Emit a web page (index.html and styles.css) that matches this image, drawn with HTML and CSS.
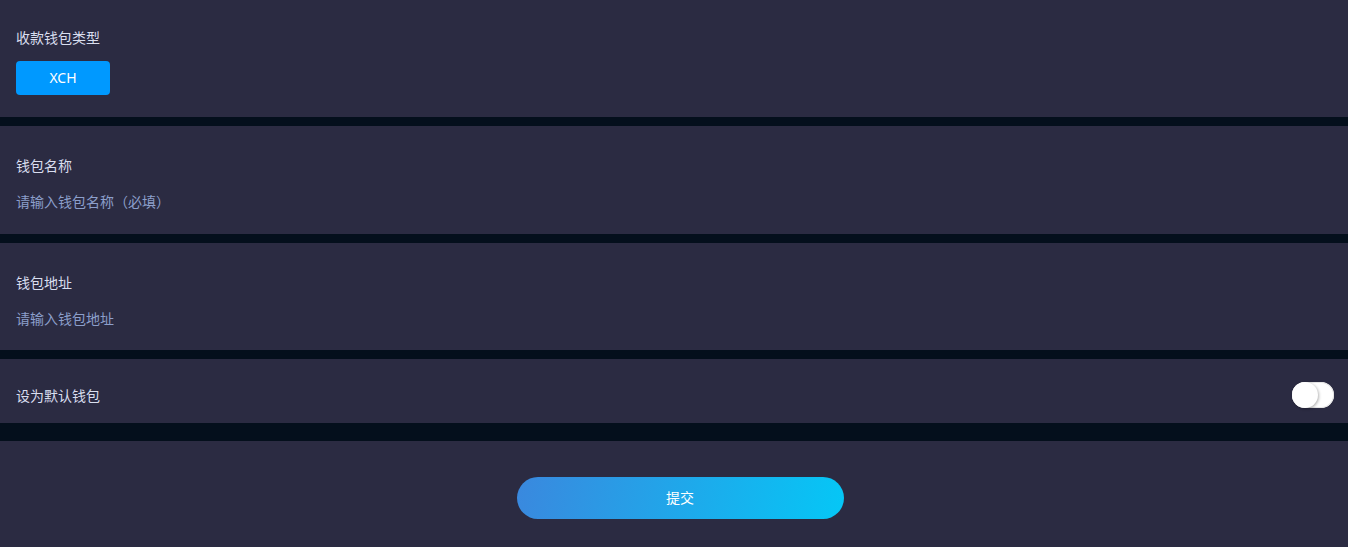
FILE: index.html
```html
<!DOCTYPE html>
<html lang="zh-CN">
<head>
  <meta charset="utf-8">
  <link rel="stylesheet" href="styles.css">
</head>
<body>
  <div class="page">
    <div class="block block-type">
      <div class="label">收款钱包类型</div>
      <div class="types">
        <button class="type-btn">XCH</button>
      </div>
    </div>
    <div class="block block-field">
      <div class="label">钱包名称</div>
      <input class="field" type="text" placeholder="请输入钱包名称（必填）">
    </div>
    <div class="block block-field block-last">
      <div class="label">钱包地址</div>
      <input class="field" type="text" placeholder="请输入钱包地址">
    </div>
    <div class="block block-switch">
      <div class="label">设为默认钱包</div>
      <span class="switch"><span class="knob"></span></span>
    </div>
    <div class="footer">
      <button class="submit">提交</button>
    </div>
  </div>
</body>
</html>
```

FILE: styles.css
```css
body {
  margin: 0;
  background-color: #040f1c;
  font-family: "Noto Sans CJK SC", "Noto Sans", sans-serif;
  font-size: 14px;
}

.page {
  display: flex;
  flex-direction: column;
  gap: 9px;
}

.block {
  background-color: #2b2b42;
  padding: 0 14px 0 16px;
}

.label {
  color: #d9deef;
  line-height: 20px;
}

.block-type {
  padding-top: 27px;
  padding-bottom: 22px;
}

.types {
  margin-top: 14px;
  display: flex;
}

.type-btn {
  width: 94px;
  height: 34px;
  border: none;
  border-radius: 4px;
  background-color: #0099ff;
  color: #fff;
  font-family: "Noto Sans", "Noto Sans CJK SC", sans-serif;
  font-size: 14px;
  padding: 0 0 2px;
}

.block-field {
  padding-top: 29px;
  padding-bottom: 23px;
  display: flex;
  flex-direction: column;
  gap: 16px;
}

.block-last {
  padding-bottom: 22px;
}

.field {
  border: none;
  outline: none;
  background: transparent;
  padding: 0;
  height: 20px;
  line-height: 20px;
  font-family: inherit;
  font-size: 14px;
  color: #d9deef;
}

.field::placeholder {
  color: #8c9fcb;
}

.block-switch {
  display: flex;
  align-items: center;
  justify-content: space-between;
  padding-top: 23px;
  padding-bottom: 15px;
}

.block-switch .label {
  margin-top: -1px;
}

.switch {
  position: relative;
  width: 42px;
  height: 26px;
  border-radius: 13px;
  background-color: #fff;
  box-shadow: inset 0 0 0 1px #e5e5e5;
}

.knob {
  position: absolute;
  left: 0;
  top: 0;
  width: 26px;
  height: 26px;
  border-radius: 50%;
  background-color: #fff;
  box-shadow: 1px 1px 3px rgba(0, 0, 0, 0.3);
}

.footer {
  margin-top: 9px;
  background-color: #2b2b42;
  display: flex;
  justify-content: center;
  padding: 36px 0 40px 12px;
}

.submit {
  width: 327px;
  height: 42px;
  border: none;
  border-radius: 21px;
  background: linear-gradient(100deg, #3a88de, #05c7f6);
  color: #fff;
  font-family: inherit;
  font-size: 14px;
  padding: 0 0 2px;
}
```
